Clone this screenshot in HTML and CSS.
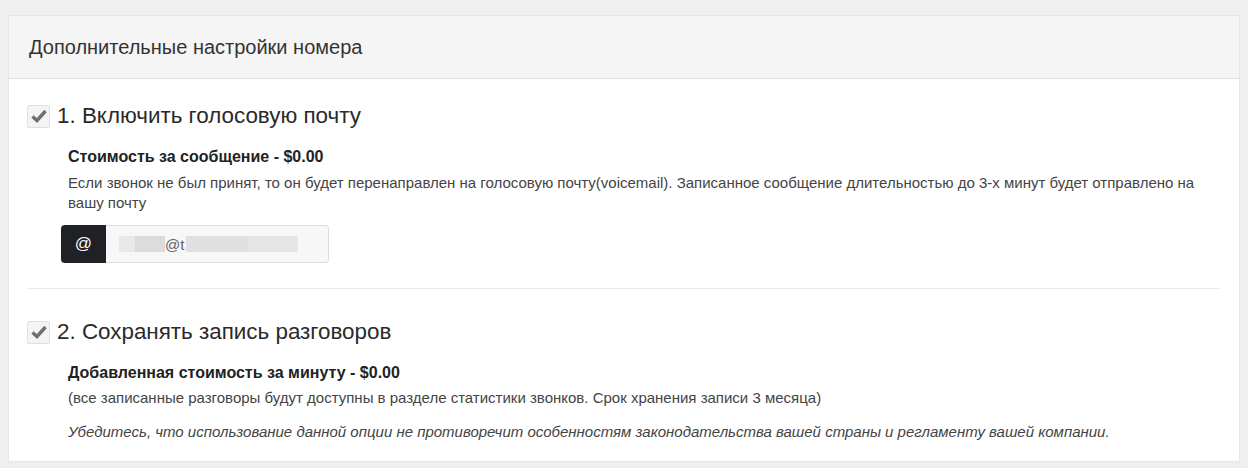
FILE: index.html
```html
<!DOCTYPE html>
<html lang="ru">
<head>
    <meta charset="UTF-8">
    <title>Дополнительные настройки номера</title>
    <link rel="stylesheet" href="styles.css">
</head>
<body>
    <div class="panel">
        <div class="panel-heading">Дополнительные настройки номера</div>
        <div class="panel-body">
            <div class="option">
                <label class="option-title">
                    <span class="check">
                        <svg viewBox="0 0 18 18" width="18" height="18"><path d="M2.5 9.5 L7 13.5 L15.5 4" fill="none" stroke="#707070" stroke-width="3.4"/></svg>
                    </span>
                    1. Включить голосовую почту
                </label>
                <div class="option-info">
                    <div class="price">Стоимость за сообщение - $0.00</div>
                    <p class="desc">Если звонок не был принят, то он будет перенаправлен на голосовую почту(voicemail). Записанное сообщение длительностью до 3-х минут будет отправлено на вашу почту</p>
                    <div class="input-group">
                        <span class="addon">@</span>
                        <div class="field">
                            <span class="blur b1"></span><span class="blur b2"></span><span class="at">@t</span><span class="blur b3"></span><span class="blur b4"></span>
                        </div>
                    </div>
                </div>
            </div>
            <div class="option">
                <label class="option-title">
                    <span class="check">
                        <svg viewBox="0 0 18 18" width="18" height="18"><path d="M2.5 9.5 L7 13.5 L15.5 4" fill="none" stroke="#707070" stroke-width="3.4"/></svg>
                    </span>
                    2. Сохранять запись разговоров
                </label>
                <div class="option-info">
                    <div class="price">Добавленная стоимость за минуту - $0.00</div>
                    <p class="desc">(все записанные разговоры будут доступны в разделе статистики звонков. Срок хранения записи 3 месяца)</p>
                    <p class="note">Убедитесь, что использование данной опции не противоречит особенностям законодательства вашей страны и регламенту вашей компании.</p>
                </div>
            </div>
        </div>
    </div>
</body>
</html>
```

FILE: styles.css
```css
body {
    margin: 0;
    padding: 15px 8px 0 8px;
    background-color: #efefef;
    font-family: "Liberation Sans", Arial, sans-serif;
    color: #333;
}

.panel {
    background-color: #fff;
    border: 1px solid #e6e6e6;
}

.panel-heading {
    background-color: #f5f5f5;
    border-bottom: 1px solid #e3e3e3;
    padding: 0 20px;
    height: 62px;
    line-height: 62px;
    font-size: 20px;
    color: #333;
}

.panel-body {
    padding: 0 19px 0 18px;
}

.option {
    padding: 24px 0 25px 0;
}

.option + .option {
    border-top: 1px solid #ebebeb;
    padding-top: 30px;
    padding-bottom: 19px;
}

.option-title {
    display: flex;
    align-items: center;
    font-size: 22.4px;
    color: #2a2a2a;
    gap: 7px;
    height: 26px;
}

.check {
    width: 21px;
    height: 21px;
    border: 1px solid #e0e0e0;
    background-color: #f4f4f4;
    display: flex;
    align-items: center;
    justify-content: center;
    border-radius: 2px;
}

.option-info {
    padding-left: 41px;
    padding-top: 18px;
}

.price {
    font-weight: bold;
    font-size: 16px;
    color: #222;
    line-height: 20px;
}

.desc {
    margin: 6px 0 0 0;
    font-size: 15px;
    line-height: 20px;
    color: #444;
}

.option + .option .desc {
    margin-top: 5px;
}

.note {
    margin: 14px 0 0 0;
    font-size: 15px;
    font-style: italic;
    line-height: 20px;
    color: #444;
}

.input-group {
    display: flex;
    width: 268px;
    height: 38px;
    margin: 12px 0 0 -7px;
}

.addon {
    background-color: #1f2125;
    color: #fff;
    width: 45px;
    display: flex;
    align-items: center;
    justify-content: center;
    font-size: 17px;
    border-radius: 4px 0 0 4px;
}

.field {
    flex: 1;
    background-color: #f7f7f7;
    border: 1px solid #dedede;
    border-left: none;
    border-radius: 0 4px 4px 0;
    display: flex;
    align-items: center;
    padding-left: 13px;
    font-size: 15px;
    color: #666;
}

.blur {
    display: inline-block;
    height: 16px;
    background-color: #e2e2e2;
}

.b1 { width: 16px; background-color: #e8e8e8; }
.b2 { width: 30px; background-color: #dcdcdc; }
.b3 { width: 62px; background-color: #e0e0e0; }
.b4 { width: 50px; background-color: #e6e6e6; }

.at {
    margin-right: 2px;
}
```
